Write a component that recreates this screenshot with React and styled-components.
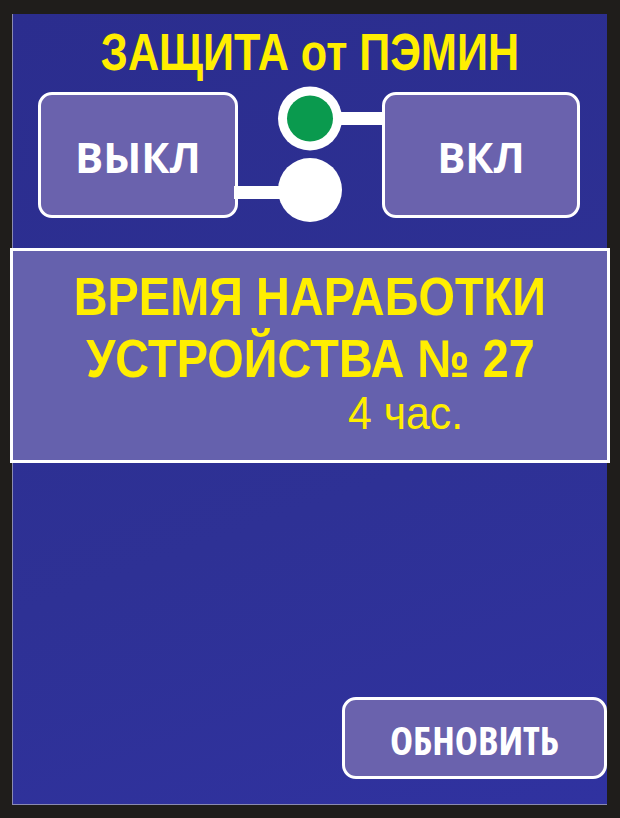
import React from "react";
import styled, { createGlobalStyle } from "styled-components";

const GlobalStyle = createGlobalStyle`
  html, body {
    margin: 0;
    padding: 0;
    background: #1f1d1b;
  }
  #root {
    width: 620px;
    height: 818px;
  }
`;

const Screen = styled.div`
  box-sizing: border-box;
  width: 620px;
  height: 818px;
  padding: 14px 13px 13px 12px;
  background: #1f1d1b;
`;

const Panel = styled.div`
  box-sizing: border-box;
  height: 100%;
  display: flex;
  flex-direction: column;
  background: linear-gradient(160deg, #2b2d8e 0%, #2e3195 60%, #3032a0 100%);
  border-left: 1px solid #8a8ab0;
  border-bottom: 1px solid #8a8ab0;
`;

// narrow caption text: Arial Narrow is not installed, so squeeze Liberation Sans
const Narrow = styled.span`
  display: inline-block;
  white-space: nowrap;
  transform: scaleX(${(p) => p.$sx});
  transform-origin: ${(p) => p.$origin || "center"};
`;

const Title = styled.h1`
  box-sizing: border-box;
  margin: 0;
  height: 78px;
  padding-top: 12px;
  text-align: center;
  font-family: "Liberation Sans", Arial, sans-serif;
  font-weight: 700;
  font-size: 52px;
  line-height: 52px;
  color: #ffee00;
`;

const SwitchRow = styled.div`
  display: flex;
  align-items: flex-start;
  padding-left: 25px;
`;

const Key = styled.div`
  box-sizing: border-box;
  width: ${(p) => p.$w}px;
  height: ${(p) => p.$h}px;
  padding-top: 3px;
  display: flex;
  align-items: center;
  justify-content: center;
  background: #6a62ad;
  border: 3px solid #ffffff;
  border-radius: 14px;
  font-family: "Open Sans", "Noto Sans", sans-serif;
  font-stretch: ${(p) => p.$stretch}%;
  font-weight: 700;
  font-size: ${(p) => p.$fs}px;
  color: #ffffff;
`;

const InfoBox = styled.div`
  box-sizing: border-box;
  margin: 24px -3px 0 -3px;
  height: 215px;
  padding-top: 15px;
  background: #6561ad;
  border: 3px solid #ffffff;
  font-family: "Liberation Sans", Arial, sans-serif;
  color: #ffee00;
  text-align: center;
`;

const BigLine = styled.div`
  font-weight: 700;
  font-size: 53px;
  line-height: 62px;
`;

const Hours = styled.div`
  padding-left: 335px;
  text-align: left;
  font-size: 46px;
  line-height: 46px;
`;

const Footer = styled.div`
  margin-top: auto;
  display: flex;
  justify-content: flex-end;
  padding-bottom: 25px;
`;

const Toggle = () => (
  <svg width="144" height="132" viewBox="0 0 144 132" style={{ overflow: "visible" }}>
    <rect x="96" y="20" width="52" height="13" fill="#ffffff" />
    <rect x="-4" y="94" width="52" height="13" fill="#ffffff" />
    <circle cx="72" cy="26.5" r="32" fill="#ffffff" />
    <circle cx="72" cy="26.5" r="23" fill="#0a9a4e" />
    <circle cx="72" cy="98" r="32" fill="#ffffff" />
  </svg>
);

export default function App() {
  return (
    <>
      <GlobalStyle />
      <Screen>
        <Panel>
          <Title>
            <Narrow $sx={0.83}>ЗАЩИТА от ПЭМИН</Narrow>
          </Title>
          <SwitchRow>
            <Key $w={200} $h={126} $fs={42} $stretch={90}>ВЫКЛ</Key>
            <Toggle />
            <Key $w={198} $h={126} $fs={42} $stretch={90}>ВКЛ</Key>
          </SwitchRow>
          <InfoBox>
            <BigLine>
              <Narrow $sx={0.885}>ВРЕМЯ НАРАБОТКИ</Narrow>
            </BigLine>
            <BigLine>
              <Narrow $sx={0.885}>УСТРОЙСТВА № 27</Narrow>
            </BigLine>
            <Hours>
              <Narrow $sx={0.93} $origin="left">4 час.</Narrow>
            </Hours>
          </InfoBox>
          <Footer>
            <Key $w={265} $h={82} $fs={39} $stretch={80}>ОБНОВИТЬ</Key>
          </Footer>
        </Panel>
      </Screen>
    </>
  );
}
